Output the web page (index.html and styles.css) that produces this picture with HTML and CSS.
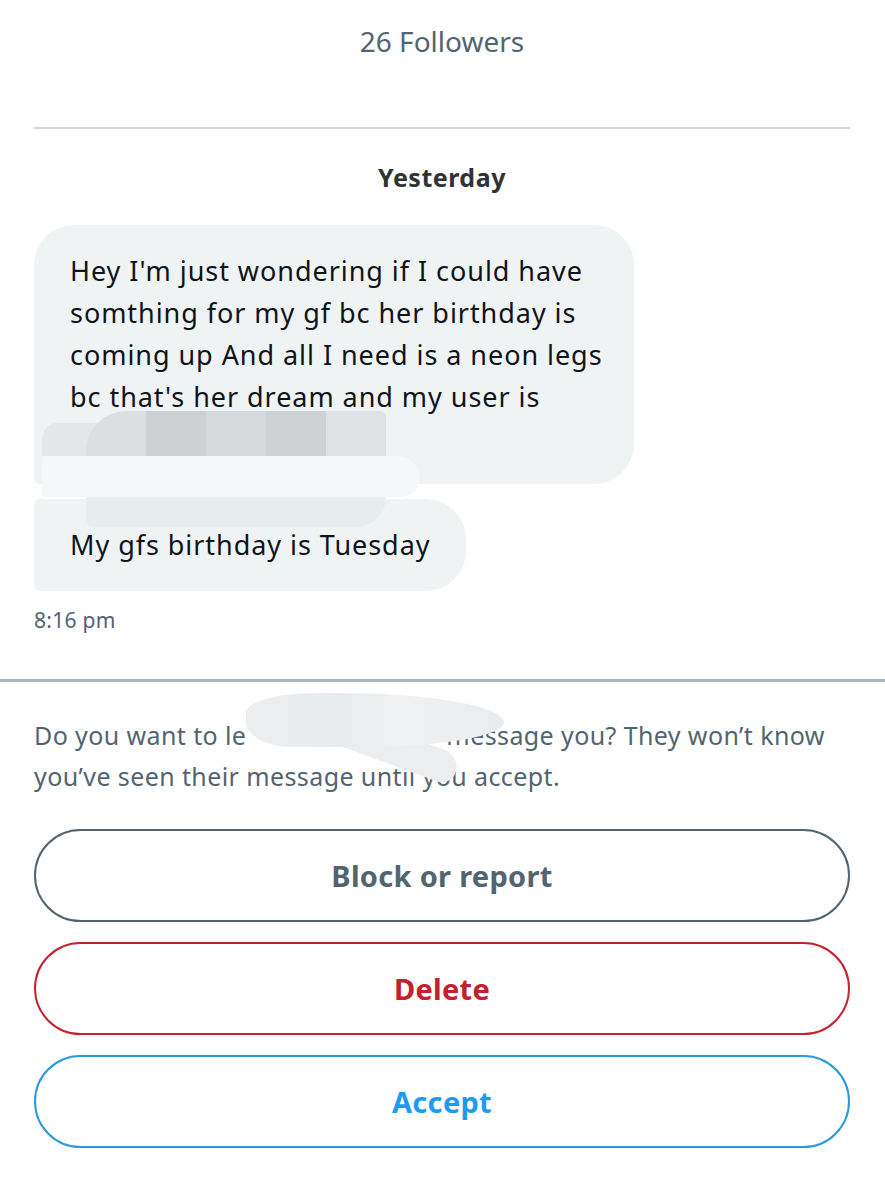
FILE: index.html
```html
<!DOCTYPE html>
<html lang="en">
<head>
<meta charset="utf-8">
<title>Message request</title>
<link rel="stylesheet" href="styles.css">
</head>
<body>
<div class="page">
  <div class="profile">
    <div class="followers">26 Followers</div>
    <div class="divider"></div>
  </div>

  <div class="day">Yesterday</div>

  <div class="thread">
    <div class="bubble first">Hey I'm just wondering if I could have somthing for my gf bc her birthday is coming up And all I need is a neon legs bc that's her dream and my user is <span class="hidden-line"></span></div>
    <div class="bubble last">My gfs birthday is Tuesday</div>
    <div class="smudge smudge-c"></div>
    <div class="smudge smudge-a">
      <span class="blk b1"></span><span class="blk b2"></span><span class="blk b3"></span><span class="blk b4"></span><span class="blk b5"></span>
    </div>
    <div class="smudge smudge-b"></div>
    <div class="smudge smudge-e"></div>
  </div>

  <div class="time">8:16 pm</div>
</div>

<div class="rule"></div>

<div class="page">
  <div class="prompt">
    <p>Do you want to le<span class="gap"></span>message you? They won’t know you’ve seen their message until you accept.</p>
    <div class="smudge smudge-f"></div>
    <div class="smudge smudge-d"></div>
  </div>

  <div class="actions">
    <button class="btn btn-block">Block or report</button>
    <button class="btn btn-delete">Delete</button>
    <button class="btn btn-accept">Accept</button>
  </div>
</div>
</body>
</html>
```

FILE: styles.css
```css
* { box-sizing: border-box; }

html, body {
  margin: 0;
  padding: 0;
  background: #ffffff;
}

body {
  font-family: "Noto Sans", "Open Sans", Roboto, sans-serif;
  color: #0f1419;
  width: 885px;
}

.page {
  padding: 0 35px 0 34px;
}

.profile {
  padding-top: 21px;
}

.followers {
  text-align: center;
  font-size: 28px;
  line-height: 40px;
  color: #536471;
}

.divider {
  margin-top: 66px;
  height: 2px;
  background: #cfd9de;
}

.day {
  text-align: center;
  font-weight: 700;
  font-size: 25px;
  letter-spacing: 0.5px;
  line-height: 34px;
  color: #2f3336;
  margin-top: 31px;
}

.thread {
  position: relative;
  margin-top: 31px;
  display: flex;
  flex-direction: column;
  align-items: flex-start;
  gap: 15px;
}

.bubble {
  background: #eff3f4;
  color: #0f1419;
  font-size: 27px;
  letter-spacing: 0.95px;
  line-height: 42px;
  border-radius: 40px;
}

.bubble.first {
  width: 600px;
  padding: 25px 30px 24px 36px;
  border-bottom-left-radius: 6px;
}

.bubble.last {
  padding: 25px 36px 25px 36px;
  border-top-left-radius: 6px;
  border-bottom-left-radius: 6px;
}

.hidden-line {
  display: inline-block;
  width: 300px;
  height: 30px;
  vertical-align: middle;
}

.smudge {
  position: absolute;
  pointer-events: none;
}

.smudge-a {
  left: 52px;
  top: 186px;
  width: 300px;
  height: 46px;
  display: flex;
  border-radius: 40px 6px 0 0;
  overflow: hidden;
}

.blk { flex: 1; height: 100%; }
.b1 { background: #dcdfe1; }
.b2 { background: #cdd1d3; }
.b3 { background: #d6d9db; }
.b4 { background: #cfd2d4; }
.b5 { background: #dfe2e4; }

.smudge-c {
  left: 8px;
  top: 198px;
  width: 60px;
  height: 34px;
  background: #e4e7e9;
  border-radius: 16px 0 0 0;
}

.smudge-b {
  left: 8px;
  top: 231px;
  width: 378px;
  height: 41px;
  background: #f6f7f8;
  border-radius: 2px 24px 20px 2px;
}

.smudge-e {
  left: 52px;
  top: 272px;
  width: 300px;
  height: 30px;
  background: #e6e9eb;
  border-radius: 0 0 40px 10px;
  opacity: 0.7;
}

.time {
  margin-top: 15px;
  font-size: 21px;
  letter-spacing: 0.3px;
  line-height: 28px;
  color: #536471;
}

.rule {
  margin-top: 45px;
  height: 3px;
  background: #aab8c2;
}

.prompt {
  position: relative;
  margin-top: 33px;
}

.prompt p {
  margin: 0;
  font-size: 25px;
  letter-spacing: 0.4px;
  line-height: 41px;
  color: #536471;
}

.gap {
  display: inline-block;
  width: 200px;
  height: 20px;
}

.smudge-d {
  left: 212px;
  top: -22px;
  width: 258px;
  height: 54px;
  background: linear-gradient(90deg, #eceef0 0%, #e8ebed 35%, #eff1f2 60%, #e9ecee 100%);
  border-radius: 30% 70% 60% 20% / 40% 60% 50% 50%;
}

.smudge-f {
  left: 296px;
  top: 18px;
  width: 130px;
  height: 32px;
  background: #ebedef;
  border-radius: 10px 30px 24px 18px;
  transform: rotate(20deg);
}

.actions {
  margin-top: 32px;
  display: flex;
  flex-direction: column;
  gap: 20px;
}

.btn {
  display: block;
  width: 100%;
  height: 93px;
  border-radius: 47px;
  background: #ffffff;
  font-family: "Noto Sans", "Open Sans", Roboto, sans-serif;
  font-weight: 700;
  font-size: 29px;
  letter-spacing: 0.3px;
  border: 2px solid;
  cursor: pointer;
}

.btn-block {
  color: #536471;
  border-color: #536471;
}

.btn-delete {
  color: #c4202e;
  border-color: #c4222f;
}

.btn-accept {
  color: #1d9bf0;
  border-color: #2a9ad9;
}
```
